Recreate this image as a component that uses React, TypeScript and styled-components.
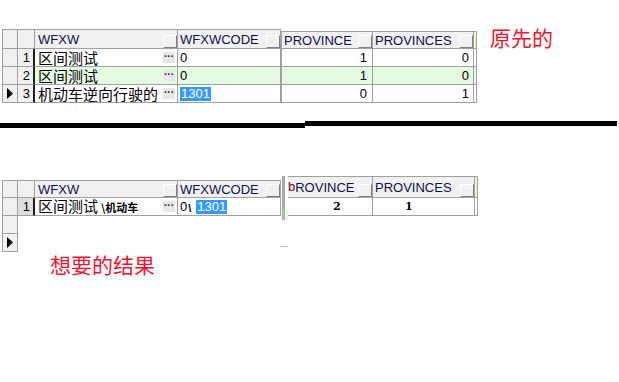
import React from 'react';
import styled, { createGlobalStyle } from 'styled-components';

const LINE = '#a0a0a0';
const FACE = '#f0f0f0';
const INK = '#10104a';
const CJK = '"Noto Sans CJK SC", "Liberation Sans", sans-serif';

const GlobalStyle = createGlobalStyle`
  html, body {
    background: #ffffff;
    margin: 0;
    padding: 0;
  }
  body {
    color: #000000;
    font-family: "Liberation Sans", Arial, sans-serif;
    font-size: 13px;
  }
`;

const StyledPage = styled.div`
  display: flex;
  flex-direction: column;
  height: 382px;
  overflow: hidden;
  width: 619px;
`;
const StyledSection = styled.section<{ $top: number }>`
  align-items: flex-start;
  display: flex;
  padding: ${p => p.$top}px 0 0 2px;
`;
const StyledNote = styled.h2<{ $left: number; $top: number }>`
  color: #f0142e;
  font-family: ${CJK};
  font-size: 21px;
  font-weight: 400;
  line-height: 26px;
  margin: ${p => p.$top}px 0 0 ${p => p.$left}px;
`;
// Thick divider, drawn in two slightly offset strokes
const StyledRule = styled.div`
  align-items: flex-start;
  display: flex;
  margin-top: 18px;
`;
const StyledStroke = styled.span<{ $width: number; $drop: number }>`
  background: #000000;
  display: block;
  height: 5px;
  margin-top: ${p => p.$drop}px;
  width: ${p => p.$width}px;
`;

const StyledPart = styled.div<{ $cols: string; $head: number; $lift?: number; $edge?: boolean }>`
  border-left: ${p => (p.$edge ? `1px solid ${LINE}` : 'none')};
  border-top: 1px solid ${LINE};
  display: grid;
  flex: none;
  grid-auto-rows: 18px;
  grid-template-columns: ${p => p.$cols};
  grid-template-rows: ${p => p.$head}px;
  margin-top: ${p => p.$lift ?? 0}px;
`;
const StyledHead = styled.div<{ $tint?: string; $pad?: number }>`
  align-items: center;
  background: ${p => p.$tint ?? FACE};
  border-bottom: 1px solid ${LINE};
  border-right: 1px solid ${LINE};
  box-sizing: border-box;
  color: ${INK};
  display: flex;
  justify-content: space-between;
  min-width: 0;
  overflow: hidden;
  padding-left: ${p => p.$pad ?? 2}px;
  white-space: nowrap;
`;
const StyledHeadButton = styled.span`
  align-self: flex-end;
  background: ${FACE};
  border: 1px solid;
  border-color: #ffffff #808080 #808080 #ffffff;
  box-sizing: border-box;
  flex: none;
  height: 13px;
  width: 14px;
`;
const StyledStray = styled.span`
  color: #7a0018;
  vertical-align: 1px;
`;
const StyledMarker = styled.div`
  align-items: center;
  background: ${FACE};
  border-bottom: 1px solid ${LINE};
  border-right: 1px solid ${LINE};
  box-sizing: border-box;
  display: flex;
  justify-content: center;
`;
const StyledRowNo = styled.div<{ $active?: boolean }>`
  align-items: center;
  background: ${p => (p.$active ? '#dedede' : FACE)};
  border-bottom: 1px solid ${LINE};
  border-right: 2px solid #1e1e1e;
  box-sizing: border-box;
  display: flex;
  justify-content: flex-end;
  padding-right: 3px;
`;
const StyledCell = styled.div<{ $tint?: 'plain' | 'green'; $align?: 'left' | 'right'; $pad?: number }>`
  align-items: center;
  background: ${p => (p.$tint === 'green' ? '#e4fbe2' : '#ffffff')};
  border-bottom: 1px solid ${LINE};
  border-right: 1px solid ${LINE};
  box-sizing: border-box;
  display: flex;
  justify-content: ${p => (p.$align === 'right' ? 'flex-end' : 'flex-start')};
  min-width: 0;
  padding: ${p => (p.$align === 'right' ? `0 ${p.$pad ?? 3}px 0 0` : `0 0 0 ${p.$pad ?? 2}px`)};
  white-space: nowrap;
`;
const StyledVoid = styled.div`
  grid-column: 2 / -1;
`;
const StyledName = styled.span`
  flex: 1;
  font-family: ${CJK};
  font-size: 15px;
  line-height: 16px;
`;
const StyledSuffix = styled.span`
  font-family: ${CJK};
  font-size: 11px;
  font-weight: 700;
  margin-left: 3px;
`;
const StyledSlash = styled.span`
  font-size: 11px;
  font-weight: 700;
  margin: 2px 5px 0 1px;
`;
const StyledMore = styled.span`
  background: #e6e6e6;
  color: #202020;
  flex: none;
  font-family: "Liberation Sans", sans-serif;
  font-size: 10px;
  font-weight: 700;
  height: 11px;
  line-height: 9px;
  margin: 0 2px 1px 0;
  text-align: center;
  width: 12px;
`;
const StyledPick = styled.span`
  background: #3399ff;
  color: #ffffff;
  line-height: 14px;
  padding: 0 1px;
`;
const StyledTally = styled.span`
  font-family: "DejaVu Serif", serif;
  font-size: 11px;
  font-weight: 700;
`;
const StyledSplitter = styled.div`
  display: flex;
  flex: none;
  flex-direction: column;
  width: 7px;
`;
const StyledSplitBar = styled.span`
  background: #a8a8a8;
  display: block;
  height: 34px;
  margin-left: 1px;
  width: 3px;
`;
const StyledSplitPatch = styled.span`
  background: linear-gradient(to right, #e4fbe2 1px, #b4b4b4 1px 4px, #e4fbe2 4px);
  display: block;
  height: 10px;
`;
const StyledSplitDash = styled.span`
  background: #b8b8b8;
  display: block;
  height: 1px;
  margin-top: 26px;
`;

interface Row {
  no: number;
  name: string;
  code: string;
  province: string;
  provinces: string;
  tint: 'plain' | 'green';
  current?: boolean;
}

const rows: Row[] = [
  { no: 1, name: '区间测试', code: '0', province: '1', provinces: '0', tint: 'plain' },
  { no: 2, name: '区间测试', code: '0', province: '1', provinces: '0', tint: 'green' },
  { no: 3, name: '机动车逆向行驶的', code: '1301', province: '0', provinces: '1', tint: 'plain', current: true }
];

const Pointer: React.FC = (): JSX.Element => (
  <svg width='6' height='11' viewBox='0 0 6 11'>
    <polygon points='0,0 6,5.5 0,11' fill='#000000' />
  </svg>
);

const Head: React.FC<any> = ({ children, tint, pad, button = true }): JSX.Element => (
  <StyledHead $tint={tint} $pad={pad}>
    <span>{children}</span>
    {button ? <StyledHeadButton /> : null}
  </StyledHead>
);

const LEFT_COLS = '15px 17px 143px 103px';

const OriginalGrid: React.FC = (): JSX.Element => (
  <>
    <StyledPart $cols={LEFT_COLS} $head={19} $edge>
      <Head button={false} />
      <Head button={false} />
      <Head pad={3}>WFXW</Head>
      <Head>WFXWCODE</Head>
      {rows.map(row => (
        <React.Fragment key={row.no}>
          <StyledMarker>{row.current ? <Pointer /> : null}</StyledMarker>
          <StyledRowNo>{row.no}</StyledRowNo>
          <StyledCell $tint={row.tint} $pad={3}>
            <StyledName>{row.name}</StyledName>
            <StyledMore>···</StyledMore>
          </StyledCell>
          <StyledCell $tint={row.tint}>
            {row.current ? <StyledPick>{row.code}</StyledPick> : row.code}
          </StyledCell>
        </React.Fragment>
      ))}
    </StyledPart>
    <StyledPart $cols='91px 101px 3px' $head={17} $lift={2} $edge>
      <Head>PROVINCE</Head>
      <Head>PROVINCES</Head>
      <Head button={false} tint='#f6f0c8' />
      {rows.map(row => (
        <React.Fragment key={row.no}>
          <StyledCell $tint={row.tint} $align='right' $pad={5}>{row.province}</StyledCell>
          <StyledCell $tint={row.tint} $align='right' $pad={4}>{row.provinces}</StyledCell>
          <StyledCell $tint={row.tint} />
        </React.Fragment>
      ))}
    </StyledPart>
  </>
);

const WantedGrid: React.FC = (): JSX.Element => (
  <>
    <StyledPart $cols={LEFT_COLS} $head={17} $lift={4} $edge>
      <Head button={false} />
      <Head button={false} />
      <Head pad={3}>WFXW</Head>
      <Head>WFXWCODE</Head>
      <StyledMarker />
      <StyledRowNo $active>1</StyledRowNo>
      <StyledCell $pad={3}>
        <StyledName>
          区间测试<StyledSuffix>\机动车</StyledSuffix>
        </StyledName>
        <StyledMore>···</StyledMore>
      </StyledCell>
      <StyledCell>
        0<StyledSlash>\</StyledSlash>
        <StyledPick>1301</StyledPick>
      </StyledCell>
      <StyledMarker />
      <StyledVoid />
      <StyledMarker>
        <Pointer />
      </StyledMarker>
      <StyledVoid />
    </StyledPart>
    <StyledSplitter>
      <StyledSplitBar />
      <StyledSplitPatch />
      <StyledSplitDash />
    </StyledSplitter>
    <StyledPart $cols='85px 102px 3px' $head={21}>
      <Head pad={0}>
        <StyledStray>b</StyledStray>ROVINCE
      </Head>
      <Head>PROVINCES</Head>
      <Head button={false} tint='#f6f0c8' />
      <StyledCell $pad={45}>
        <StyledTally>2</StyledTally>
      </StyledCell>
      <StyledCell $pad={32}>
        <StyledTally>1</StyledTally>
      </StyledCell>
      <StyledCell />
    </StyledPart>
  </>
);

const App: React.FC = (): JSX.Element => {
  return (
    <StyledPage>
      <GlobalStyle />
      <StyledSection $top={29}>
        <OriginalGrid />
        <StyledNote $left={13} $top={-5}>原先的</StyledNote>
      </StyledSection>
      <StyledRule>
        <StyledStroke $width={305} $drop={2} />
        <StyledStroke $width={312} $drop={0} />
      </StyledRule>
      <StyledSection $top={48}>
        <WantedGrid />
      </StyledSection>
      <StyledNote $left={50} $top={-1}>想要的结果</StyledNote>
    </StyledPage>
  );
};

export default App;
